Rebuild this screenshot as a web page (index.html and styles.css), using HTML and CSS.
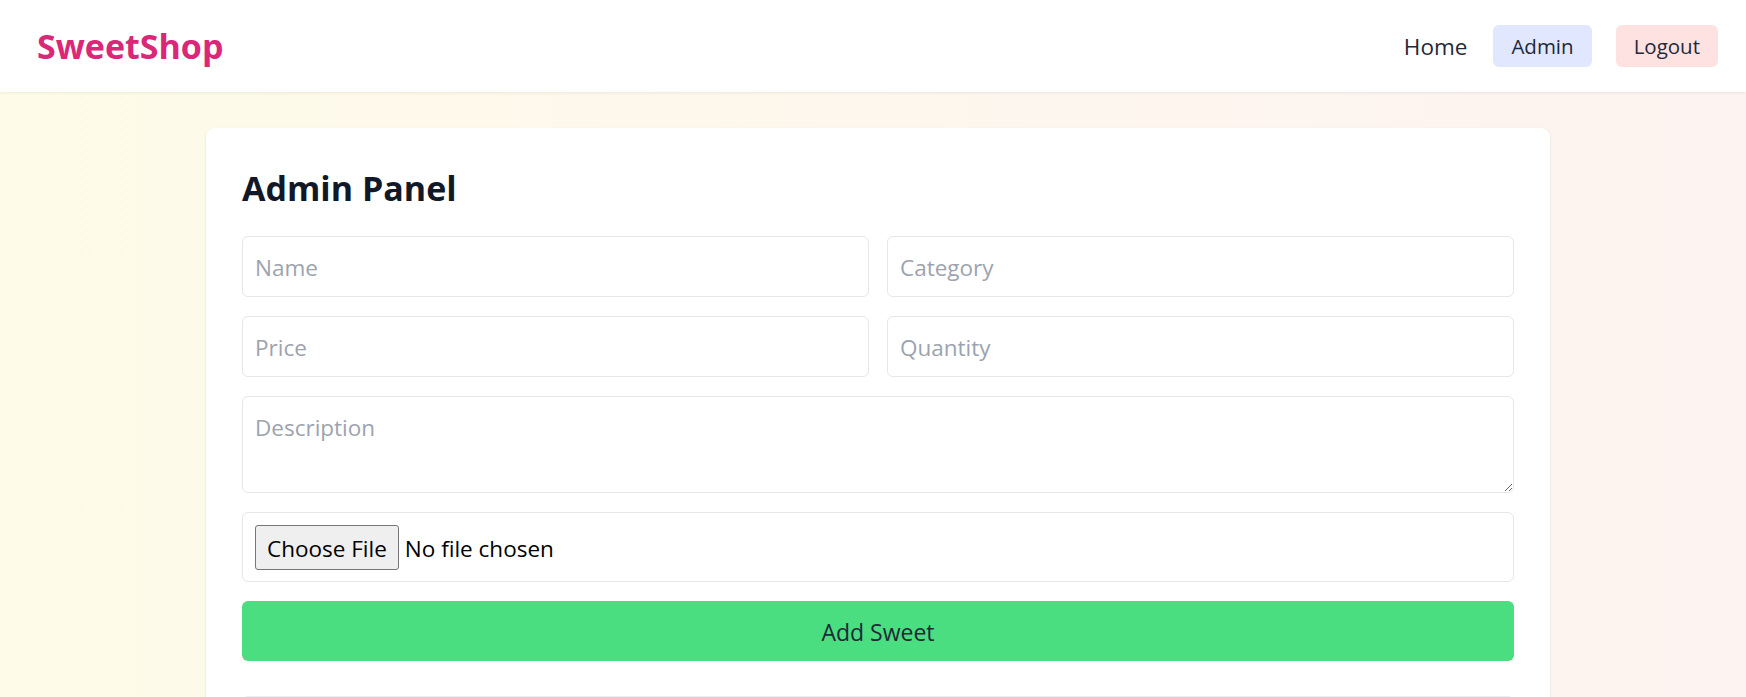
FILE: index.html
```html
<!DOCTYPE html>
<html lang="en">
<head>
<meta charset="utf-8">
<title>SweetShop – Admin</title>
<link rel="stylesheet" href="styles.css">
</head>
<body>
<header class="topbar">
  <a class="logo" href="#">SweetShop</a>
  <nav class="nav">
    <a class="nav-link" href="#">Home</a>
    <a class="nav-btn nav-admin" href="#">Admin</a>
    <button class="nav-btn nav-logout" type="button">Logout</button>
  </nav>
</header>
<main class="page">
  <section class="card">
    <h2 class="title">Admin Panel</h2>
    <form class="form">
      <input class="field" type="text" placeholder="Name">
      <input class="field" type="text" placeholder="Category">
      <input class="field" type="number" placeholder="Price">
      <input class="field" type="number" placeholder="Quantity">
      <textarea class="field area" placeholder="Description"></textarea>
      <div class="filebox"><input class="file" type="file"></div>
      <button class="submit" type="button">Add Sweet</button>
    </form>
    <div class="list"></div>
  </section>
</main>
</body>
</html>
```
FILE: styles.css
```css
* { box-sizing: border-box; }
html, body { margin: 0; }
body {
  font-family: "Open Sans", "Noto Sans", sans-serif;
  color: #1f2937;
  background: linear-gradient(to right, #fefbe8 0%, #fdf6ee 60%, #fdf3f0 100%);
  min-height: 100vh;
}
.topbar {
  height: 92px;
  background: #ffffff;
  box-shadow: 0 1px 3px rgba(0, 0, 0, 0.07);
  display: flex;
  align-items: center;
  justify-content: space-between;
  padding: 0 28px 0 37px;
  position: relative;
}
.logo {
  font-size: 34px;
  font-weight: 700;
  color: #db2777;
  text-decoration: none;
}
.nav { display: flex; align-items: center; gap: 24px; }
.nav-link {
  font-size: 22.5px;
  color: #1f2937;
  text-decoration: none;
  margin-right: 2px;
}
.nav-btn {
  height: 42px;
  display: inline-flex;
  align-items: center;
  padding: 0 18px;
  border: 0;
  border-radius: 6px;
  font-family: inherit;
  font-size: 20.5px;
  color: #1f2937;
  text-decoration: none;
}
.nav-admin { background: #e0e7ff; }
.nav-logout { background: #fee2e2; }

.page { padding: 36px 0 0 10px; }
.card {
  width: 1344px;
  margin: 0 auto;
  background: #ffffff;
  border-radius: 9px;
  box-shadow: 0 1px 3px rgba(0, 0, 0, 0.08), 0 1px 2px rgba(0, 0, 0, 0.04);
  padding: 36px 36px 36px;
}
.title {
  margin: 0 0 24px;
  font-size: 34px;
  line-height: 48px;
  font-weight: 700;
  color: #111827;
}
.form {
  display: grid;
  grid-template-columns: 1fr 1fr;
  column-gap: 18px;
  row-gap: 19px;
}
.field {
  height: 61px;
  border: 1px solid #e5e7eb;
  border-radius: 6px;
  padding: 2px 12px 0;
  font-family: inherit;
  font-size: 22.5px;
  color: #111827;
  background: #ffffff;
  outline: none;
  -moz-appearance: textfield;
}
.field::placeholder { color: #9ca3af; }
.field::-webkit-outer-spin-button,
.field::-webkit-inner-spin-button { -webkit-appearance: none; margin: 0; }
.area {
  grid-column: 1 / -1;
  height: 97px;
  padding: 13px 12px 12px;
  line-height: 36px;
  resize: vertical;
}
.filebox {
  grid-column: 1 / -1;
  height: 70px;
  border: 1px solid #e5e7eb;
  border-radius: 6px;
  padding: 12px;
}
.file {
  font-family: inherit;
  font-size: 22.5px;
  color: #000000;
}
.file::file-selector-button {
  height: 45px;
  padding: 1px 11px 0;
  margin-right: 6px;
  border: 1px solid #767676;
  border-radius: 3px;
  background: #efefef;
  font-family: inherit;
  font-size: 22.5px;
  color: #000000;
}
.submit {
  grid-column: 1 / -1;
  height: 60px;
  border: 0;
  border-radius: 6px;
  background: #4ade80;
  font-family: inherit;
  font-size: 23px;
  padding-top: 2px;
  color: #1f2937;
}
.list {
  margin-top: 35px;
  height: 120px;
  border: 1px solid #eceef1;
  border-radius: 6px;
}
```
